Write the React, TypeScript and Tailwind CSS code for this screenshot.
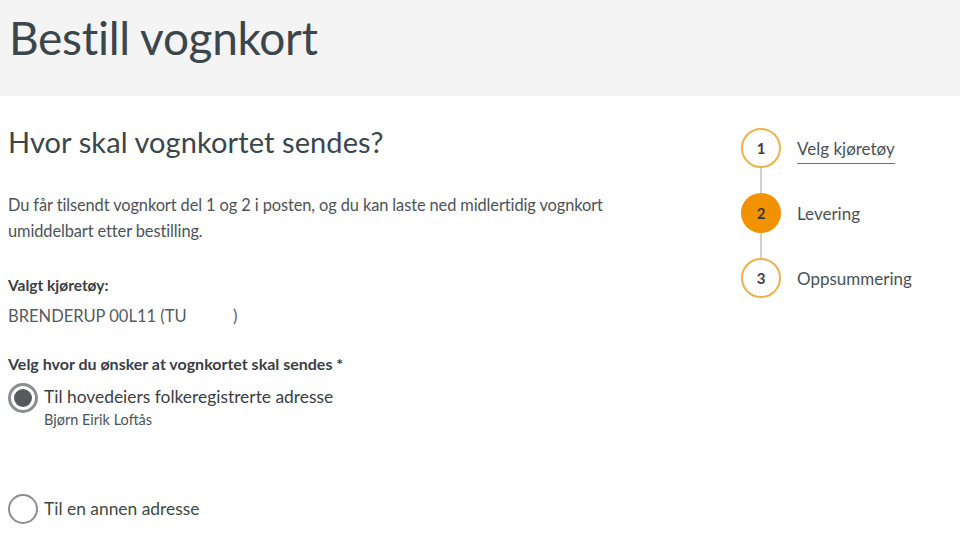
import React from 'react'

const font = { fontFamily: 'Lato, "Open Sans", sans-serif' }

function Step({ n, label, active, current, last }: { n: number; label: string; active?: boolean; current?: boolean; last?: boolean }) {
  return (
    <div className="flex">
      <div className="flex flex-col items-center w-[42px]">
        <div
          className={
            current
              ? 'w-[40px] h-[40px] rounded-full bg-[#f39200] flex items-center justify-center text-[15px] font-bold text-[#3a3a3a]'
              : 'w-[40px] h-[40px] rounded-full border-2 border-[#f0b04a] bg-white flex items-center justify-center text-[15px] font-bold text-[#3a4046]'
          }
        >
          {n}
        </div>
        {!last && <div className="w-[2px] h-[25px] bg-[#d0d0d0]" />}
      </div>
      <div className="pl-[15px] pt-[8px]">
        <span
          className={
            active
              ? 'text-[17px] text-[#4a5258] border-b border-[#6a7278] pb-[4px]'
              : 'text-[17px] text-[#4a5258]'
          }
        >
          {label}
        </span>
      </div>
    </div>
  )
}

export default function App() {
  return (
    <div className="w-[960px] h-[548px] bg-white overflow-hidden text-[#3c4449]" style={font}>
      <div className="h-[96px] bg-[#f4f4f4] pl-[9px] pt-[10px]">
        <h1 className="text-[46px] leading-[56px] text-[#3a464c] tracking-[-0.3px]">Bestill vognkort</h1>
      </div>

      <div className="flex">
        <div className="w-[740px] pl-[8px] pt-[26px]">
          <h2 className="text-[29px] leading-[40px] text-[#3a464c] tracking-[0.1px]">Hvor skal vognkortet sendes?</h2>
          <p className="mt-[30px] text-[16.4px] leading-[26px] text-[#4c5358] w-[620px] tracking-[-0.1px]">
            Du får tilsendt vognkort del 1 og 2 i posten, og du kan laste ned midlertidig vognkort umiddelbart etter bestilling.
          </p>

          <div className="mt-[29px] text-[15.5px] leading-[24px] font-bold text-[#3a4046]">Valgt kjøretøy:</div>
          <div className="mt-[7px] text-[16.5px] leading-[24px] text-[#555b60]">BRENDERUP 00L11 (TU&nbsp;&nbsp;&nbsp;&nbsp;&nbsp;&nbsp;&nbsp;&nbsp;&nbsp;&nbsp;&nbsp;)</div>

          <div className="mt-[24px] text-[16px] leading-[24px] font-bold text-[#3a4046]">Velg hvor du ønsker at vognkortet skal sendes *</div>

          <div className="mt-[7px] flex items-start">
            <div className="w-[30px] h-[30px] rounded-full border-[3px] border-[#8a8e90] flex items-center justify-center shrink-0">
              <div className="w-[18px] h-[18px] rounded-full bg-[#555a5e]" />
            </div>
            <div className="pl-[6px] pt-[4px]">
              <div className="text-[17.4px] leading-[20px] text-[#3a4046]">Til hovedeiers folkeregistrerte adresse</div>
              <div className="text-[14.5px] leading-[20px] mt-[3px] text-[#4c5358]">Bjørn Eirik Loftås</div>
            </div>
          </div>

          <div className="mt-[64px] flex items-center">
            <div className="w-[30px] h-[30px] rounded-full border-2 border-[#8a8e90] shrink-0" />
            <div className="pl-[6px] text-[17.4px] text-[#3e4a44]">Til en annen adresse</div>
          </div>
        </div>

        <div className="pt-[32px]">
          <Step n={1} label="Velg kjøretøy" active />
          <Step n={2} label="Levering" current />
          <Step n={3} label="Oppsummering" last />
        </div>
      </div>
    </div>
  )
}
